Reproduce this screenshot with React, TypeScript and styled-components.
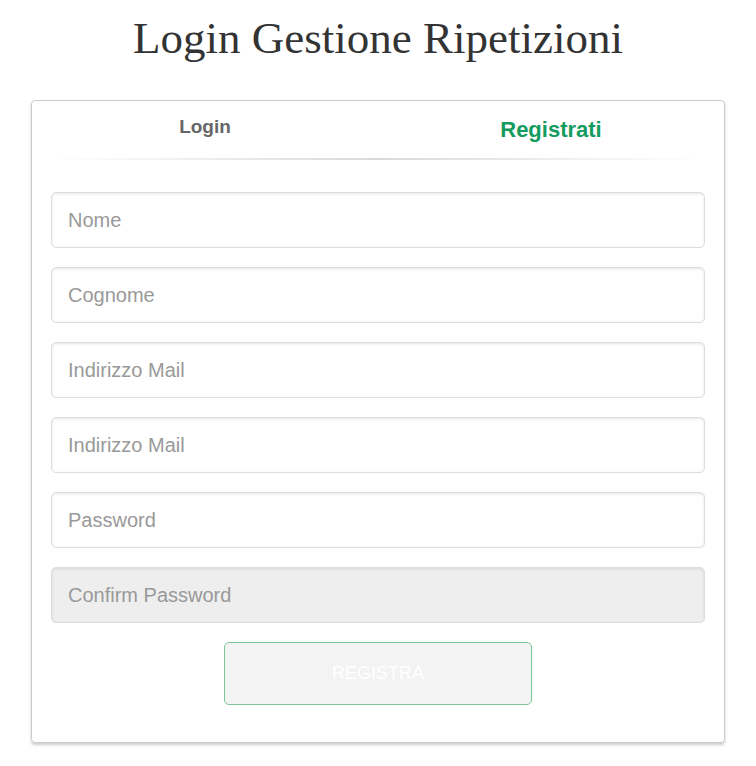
import React from "react";
import styled, { createGlobalStyle } from "styled-components";

const GlobalStyle = createGlobalStyle`
  *, *::before, *::after { box-sizing: border-box; }
  body {
    margin: 0;
    background: #fff;
    color: #333;
    font-family: "Liberation Sans", Arial, sans-serif;
  }
`;

const Page = styled.main`
  padding: 12px 31px 23px;
`;

const Title = styled.h1`
  margin: 0 0 36px;
  font: 400 45px/52px "Liberation Serif", "Times New Roman", serif;
  text-align: center;
`;

const Panel = styled.section`
  padding: 0 19px 37px;
  border: 1px solid #ccc;
  border-radius: 4px;
  box-shadow: 0 2px 3px rgba(0, 0, 0, 0.2);
`;

const Tabs = styled.nav`
  display: grid;
  grid-template-columns: 1fr 1fr;
  column-gap: 38px;
  height: 57px;
  padding-top: 15px;
  text-align: center;
`;

const Tab = styled.a<{ $active?: boolean }>`
  color: ${({ $active }) => ($active ? "#149b5e" : "#666")};
  font-size: ${({ $active }) => ($active ? "22px" : "19px")};
  line-height: ${({ $active }) => ($active ? "28px" : "22px")};
  font-weight: 700;
  text-decoration: none;
`;

const Divider = styled.hr`
  width: 100%;
  height: 2px;
  margin: 0 0 32px;
  border: 0;
  background: linear-gradient(to right, rgba(0, 0, 0, 0), rgba(0, 0, 0, 0.15), rgba(0, 0, 0, 0));
`;

const Form = styled.form`
  display: flex;
  flex-direction: column;
  gap: 19px;
`;

const Field = styled.input`
  width: 100%;
  height: 56px;
  padding: 0 16px;
  border: 1px solid #ddd;
  border-radius: 5px;
  background: #fff;
  box-shadow: inset 0 1px 3px rgba(0, 0, 0, 0.1);
  color: #555;
  font: 400 20px/28px "Liberation Sans", Arial, sans-serif;

  &::placeholder {
    color: #999;
    opacity: 1;
  }

  &:disabled {
    background: #eee;
  }
`;

const SubmitButton = styled.button`
  align-self: center;
  width: 47%;
  height: 63px;
  padding: 0 0 2px;
  border: 1px solid #7bc598;
  border-radius: 5px;
  background: #f3f3f3;
  color: #fff;
  font: 400 18px/24px "Liberation Sans", Arial, sans-serif;
  text-transform: uppercase;
`;

const fields = [
  { id: "nome", label: "Nome", type: "text" },
  { id: "cognome", label: "Cognome", type: "text" },
  { id: "mail", label: "Indirizzo Mail", type: "email" },
  { id: "confirm-mail", label: "Indirizzo Mail", type: "email" },
  { id: "password", label: "Password", type: "password" },
  { id: "confirm-password", label: "Confirm Password", type: "password", disabled: true },
];

export default function App() {
  return (
    <>
      <GlobalStyle />
      <Page>
        <Title>Login Gestione Ripetizioni</Title>
        <Panel>
          <Tabs>
            <Tab href="#login">Login</Tab>
            <Tab href="#registrati" $active aria-current="page">Registrati</Tab>
          </Tabs>
          <Divider />
          <Form>
            {fields.map(({ id, label, type, disabled }) => (
              <Field key={id} id={id} name={id} type={type} placeholder={label} aria-label={label} disabled={disabled} />
            ))}
            <SubmitButton type="submit">Registra</SubmitButton>
          </Form>
        </Panel>
      </Page>
    </>
  );
}
